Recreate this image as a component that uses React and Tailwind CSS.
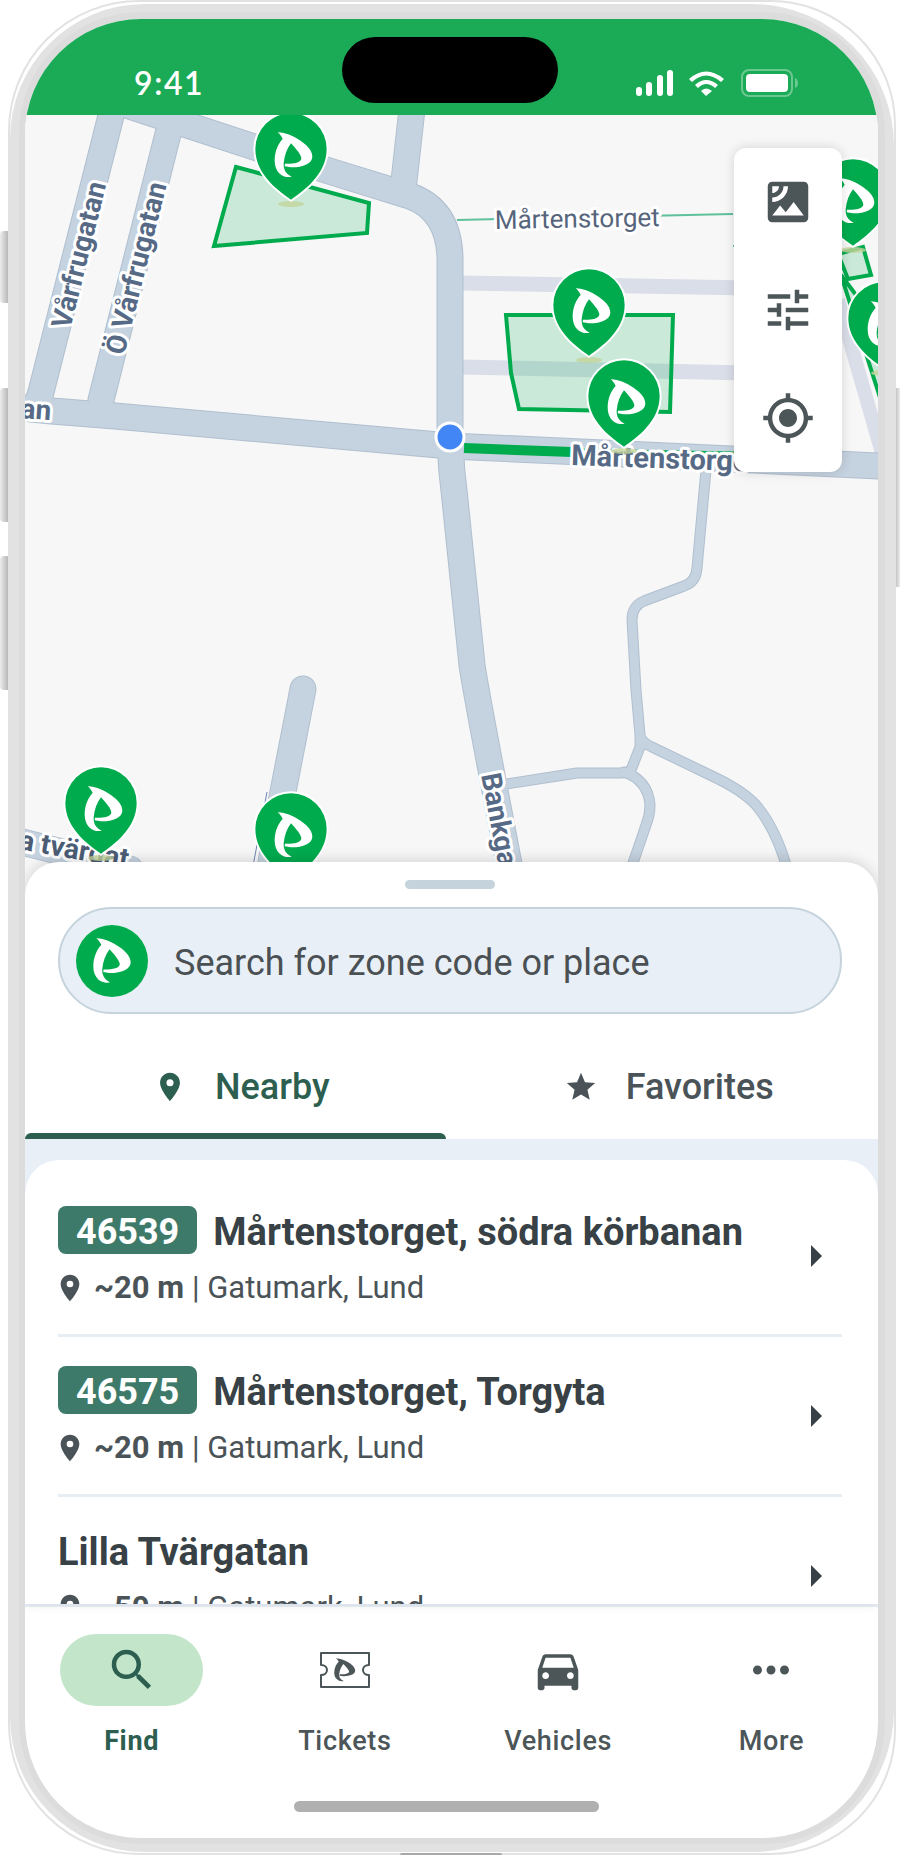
import React from "react";
import { MdDirectionsCar, MdLocationOn, MdMoreHoriz, MdMyLocation, MdSatellite, MdSearch, MdStar, MdTune } from "react-icons/md";

const LOGO_PATH =
  "M86 55C112 57 130 65 145 74C172 90 190 108 190 128C190 148 160 161 125 160L107 157L108 149C132 150 155 146 157 134C158 124 140 103 126 88C114 104 106 125 104 148C103 166 110 180 128 188C108 194 77 180 77 140C77 112 88 88 101 75C98 67 92 60 86 55Z";

const zones = [
  { code: "46539", name: "Mårtenstorget, södra körbanan", distance: "~20 m", area: "Gatumark, Lund" },
  { code: "46575", name: "Mårtenstorget, Torgyta", distance: "~20 m", area: "Gatumark, Lund" },
  { name: "Lilla Tvärgatan", distance: "~50 m", area: "Gatumark, Lund" },
];

const pins = [
  [853, 195],
  [884, 318],
  [291, 149],
  [589, 305],
  [624, 396],
  [101, 803],
  [291, 829],
];

// [path, width] in map coordinates
const roads = [
  ["M10 407L52 411L115 416L450 446L560 451L900 467", 25],
  ["M115 100L41 392L37 404", 25],
  ["M172 118L101 400", 25],
  ["M105 98L190 126L300 162L410 196Q449 210 450 258L450 440Q451 470 455 500L472 665Q474 680 491 770L512 880", 25],
  ["M413 100L403 190", 25],
  ["M303 689L282 797L268 880", 25],
  ["M10 839L130 869", 25],
  ["M706 470L697 568Q696 582 684 586L644 601Q632 606 632 620L636 690L640 735Q641 742 652 747L712 776Q742 790 756 805Q777 830 788 872", 9],
  ["M640 738L640 747L631 770Q627 773 620 773L577 773L500 785", 9],
  ["M624 772Q648 780 650 805Q650 815 646 825L632 866", 9],
];

const Logo = ({ className }) => (
  <svg viewBox="70 48 127 148" className={className} fill="currentColor" aria-hidden="true">
    <path d={LOGO_PATH} />
  </svg>
);

const Pin = ({ x, y }) => (
  <g transform={`translate(${x} ${y})`}>
    <ellipse cx="0" cy="55" rx="13" ry="3" fill="#c3d39b" opacity="0.8" />
    <g transform="scale(0.3333)">
      <path
        d="M0 152C-34 128 -107 78 -107 0A107 107 0 0 1 107 0C107 78 34 128 0 152Z"
        fill="#00ab4e"
        stroke="#fff"
        strokeWidth="12"
        paintOrder="stroke"
      />
      <path d={LOGO_PATH} fill="#fff" transform="translate(-126 -105)" />
    </g>
  </g>
);

const StreetLabel = ({ x, y, angle, size = 28, weight = 700, color = "#566a86", children }) => (
  <text
    transform={`translate(${x} ${y}) rotate(${angle})`}
    fontFamily="Roboto"
    fontSize={size}
    fontWeight={weight}
    fill={color}
    stroke="#fff"
    strokeWidth="6"
    strokeLinejoin="round"
    paintOrder="stroke"
  >
    {children}
  </text>
);

const MapView = () => (
  <svg viewBox="25 115 853 780" preserveAspectRatio="xMidYMin slice" className="absolute inset-0 h-full w-full" role="img" aria-label="Map">
    <rect x="0" y="100" width="900" height="850" fill="#f7f7f7" />

    <g stroke="#dadee8" fill="none">
      <path d="M460 283L750 288" strokeWidth="15" />
      <path d="M460 367L750 373" strokeWidth="15" />
      <path d="M838 300L884 460" strokeWidth="14" />
    </g>
    <path d="M457 220L733 214M733 246L745 245" stroke="#5fc09c" strokeWidth="2" fill="none" />

    {/* road casing first, then the fill on top */}
    <g fill="none" stroke="#b0bfcf" strokeLinecap="round" strokeLinejoin="round">
      {roads.map(([d, w]) => (
        <path key={d} d={d} strokeWidth={w + 2} />
      ))}
    </g>
    <g fill="none" stroke="#c5d2df" strokeLinecap="round" strokeLinejoin="round">
      {roads.map(([d, w]) => (
        <path key={d} d={d} strokeWidth={w} />
      ))}
    </g>
    <path d="M267 792L253 866" stroke="#6c82b4" strokeWidth="1" fill="none" />

    <g fill="#00ab4e" fillOpacity="0.18" stroke="#00ab4e" strokeWidth="4">
      <path d="M236 167L369 203L367 233L214 246Z" />
      <path d="M506 315L673 315L670 412L519 409L511 373Z" />
      <path d="M838 254L863 247L871 275L848 279Z" />
      <path d="M841 275L868 360L884 410L905 400L890 340Z" />
    </g>
    <path d="M464 448L572 452" stroke="#00ab4e" strokeWidth="10" fill="none" />
    <path d="M572 450L734 453" stroke="#00ab4e" strokeWidth="3" fill="none" />

    <StreetLabel x={70} y={330} angle={-76}>Vårfrugatan</StreetLabel>
    <StreetLabel x={124} y={356} angle={-76}>Ö Vårfrugatan</StreetLabel>
    <StreetLabel x={20} y={418} angle={4}>an</StreetLabel>
    <StreetLabel x={495} y={229} angle={-1} size={26} weight={400} color="#56657c">Mårtenstorget</StreetLabel>
    <StreetLabel x={571} y={465} angle={2} size={29}>Mårtenstorge</StreetLabel>
    <StreetLabel x={481} y={775} angle={79}>Bankga</StreetLabel>
    <StreetLabel x={18} y={849} angle={10} color="#4b5c75">a tvärgat</StreetLabel>

    {pins.map(([x, y]) => (
      <Pin key={`${x}-${y}`} x={x} y={y} />
    ))}
    <circle cx="450" cy="437" r="14" fill="#4285f4" stroke="#fff" strokeWidth="3" />
  </svg>
);

const StatusBar = () => (
  <header className="relative flex h-24 items-end justify-between bg-[#1bab57] pr-20 pb-4 pl-[109px] text-white">
    <span className="font-[Lato] text-[32px] leading-8 font-semibold tracking-wider">9:41</span>
    <div className="absolute inset-x-0 top-[18px] flex justify-center pr-[3px]">
      <div className="h-[66px] w-[216px] rounded-full bg-black" />
    </div>
    <svg viewBox="0 0 162 30" className="h-[30px] w-[162px]" fill="#fff" aria-hidden="true">
      <rect x="0" y="18" width="6" height="9" rx="3" />
      <rect x="10" y="13" width="6" height="14" rx="3" />
      <rect x="21" y="6" width="6" height="21" rx="3" />
      <rect x="31" y="1" width="6" height="26" rx="3" />
      <path d="M53 10Q70 -5 88 10L85 13Q70 0 56 13Z" />
      <path d="M59 16Q70 6 82 16L79 19Q70 11 62 19Z" />
      <path d="M65 22Q70 17 76 22L70 27Z" />
      <rect x="106" y="1" width="50" height="26" rx="7" fill="none" stroke="#fff" strokeOpacity="0.35" strokeWidth="2" />
      <rect x="110" y="5" width="42" height="18" rx="4" />
      <path d="M159 9Q162 10 162 14Q162 18 159 19Z" fillOpacity="0.35" />
    </svg>
  </header>
);

const ZoneRow = ({ zone, last }) => (
  <li>
    <a href="#zone" className={last ? "flex items-center pt-[29px] pr-5 pb-7" : "flex items-center border-b-[3px] border-[#e6edf3] pt-[29px] pr-5 pb-7"}>
      <div className="min-w-0 flex-1">
        <div className="flex h-12 items-center gap-4">
          {zone.code && (
            <span className="flex h-12 items-center rounded-lg bg-[#3e7a69] px-[18px] pt-1 text-4xl font-bold text-white">{zone.code}</span>
          )}
          <h2 className="truncate pt-1 text-[38px] leading-[48px] font-bold text-[#384145]">{zone.name}</h2>
        </div>
        <div className="mt-4 flex h-9 items-center gap-2 text-[31px] text-[#4a5357]">
          <MdLocationOn className="-ml-1 size-8" />
          <span>
            <b>{zone.distance}</b> | {zone.area}
          </span>
        </div>
      </div>
      <svg viewBox="0 0 11 22" className="h-[22px] w-[11px]" fill="#384145" aria-hidden="true">
        <path d="M0 0L11 11L0 22Z" />
      </svg>
    </a>
  </li>
);

const NavItem = ({ icon, label, active }) => (
  <a href="#nav" className="flex flex-col items-center gap-[19px]">
    <span
      className={
        active
          ? "flex h-[72px] w-[143px] items-center justify-center rounded-full bg-[#c3e6cb] text-[#2d5f50]"
          : "flex h-[72px] w-[143px] items-center justify-center text-[#4c5558]"
      }
    >
      {icon}
    </span>
    <span className={active ? "text-[27px] leading-8 font-bold tracking-wide text-[#2d5f50]" : "text-[27px] leading-8 font-medium tracking-wide text-[#4c5558]"}>
      {label}
    </span>
  </a>
);

const TicketIcon = () => (
  <svg viewBox="0 0 52 38" className="h-[38px] w-[52px]" aria-hidden="true">
    <path
      d="M2 2H50V14C42 14 42 24 50 24V36H2V24C10 24 10 14 2 14Z"
      fill="none"
      stroke="currentColor"
      strokeWidth="2"
      strokeLinejoin="round"
    />
    <path d={LOGO_PATH} fill="currentColor" transform="translate(1 -2) scale(0.185 0.17)" />
  </svg>
);

const App = () => {
  return (
    <div className="relative flex min-h-screen overflow-hidden bg-white pr-1 pl-2 font-[Roboto,sans-serif]">
      {/* side buttons */}
      <div className="absolute top-[231px] left-0 h-[72px] w-2 rounded-l-sm bg-linear-to-r from-[#ededed] to-[#b8b8b8]" />
      <div className="absolute top-[388px] left-0 h-[134px] w-2 rounded-l-sm bg-linear-to-r from-[#ededed] to-[#b8b8b8]" />
      <div className="absolute top-[556px] left-0 h-[134px] w-2 rounded-l-sm bg-linear-to-r from-[#ededed] to-[#b8b8b8]" />
      <div className="absolute top-[388px] right-0 h-[199px] w-1 bg-linear-to-r from-[#c4c4c4] to-[#ededed]" />

      {/* phone frame */}
      <div className="flex flex-1 rounded-l-[131px] rounded-r-[125px] border-2 border-[#e2e2e2] pt-0.5 pb-px">
        <div className="flex flex-1 rounded-l-[135px] rounded-r-[142px] bg-[#e2e2e2] px-[9px] py-2">
          <div className="flex flex-1 rounded-[122px] bg-[#dcdcdc] pt-[7px] pr-[7px] pb-1.5 pl-1.5">
            <div className="flex min-w-0 flex-1 flex-col overflow-hidden rounded-[116px] bg-white">
              <StatusBar />

              <main className="flex flex-1 flex-col">
                <div className="relative min-h-96 flex-1">
                  <MapView />
                  <div className="absolute top-[33px] right-9 flex w-[108px] flex-col overflow-hidden rounded-xl bg-white text-[#4c5558] shadow-[0_0_12px_rgba(0,0,0,0.15)]">
                    <button type="button" aria-label="Satellite view" className="flex h-[108px] items-center justify-center">
                      <MdSatellite className="size-[54px]" />
                    </button>
                    <button type="button" aria-label="Filters" className="flex h-[108px] items-center justify-center">
                      <MdTune className="size-[54px]" />
                    </button>
                    <button type="button" aria-label="My location" className="flex h-[108px] items-center justify-center">
                      <MdMyLocation className="size-[54px]" />
                    </button>
                  </div>
                </div>

                {/* bottom sheet */}
                <section className="relative -mt-8 rounded-t-[34px] bg-white pt-[18px] shadow-[0_-2px_14px_rgba(0,0,0,0.14)]">
                  <div className="flex justify-center pr-[3px]">
                    <div className="h-[9px] w-[90px] rounded-full bg-[#c5d3dd]" />
                  </div>
                  <form className="mt-[18px] pr-9 pl-[33px]">
                    <label className="flex h-[107px] items-center gap-[26px] rounded-full border-2 border-[#c5d3dd] bg-[#e8eff6] px-4">
                      <span className="flex size-[72px] shrink-0 items-center justify-center rounded-full bg-[#00ab4e] text-white">
                        <Logo className="h-[49px] w-[42px]" />
                      </span>
                      <input
                        type="text"
                        aria-label="Search for zone code or place"
                        placeholder="Search for zone code or place"
                        className="min-w-0 flex-1 bg-transparent pt-1 text-4xl text-[#4a5053] outline-none placeholder:text-[#4a5053]"
                      />
                    </label>
                  </form>

                  <div role="tablist" className="mt-[26px] grid grid-cols-2 text-4xl font-medium">
                    <button type="button" role="tab" aria-selected="true" className="flex flex-col text-[#2d5f50]">
                      <span className="flex h-[93px] w-full items-center justify-center gap-7 pl-1.5">
                        <MdLocationOn className="size-[34px]" />
                        Nearby
                      </span>
                      <span className="w-full pr-1.5">
                        <span className="block h-1.5 rounded-t-md bg-[#2d5f50]" />
                      </span>
                    </button>
                    <button type="button" role="tab" aria-selected="false" className="flex h-[99px] items-center justify-center gap-7 pb-1.5 pl-2 text-[#4a5357]">
                      <MdStar className="size-[34px]" />
                      Favorites
                    </button>
                  </div>

                  <div className="bg-[#e8eff6] pt-[21px]">
                    <ul className="h-[444px] overflow-hidden rounded-t-[34px] bg-white pt-[17px] pr-9 pl-[33px]">
                      {zones.map((zone, i) => (
                        <ZoneRow key={zone.name} zone={zone} last={i === zones.length - 1} />
                      ))}
                    </ul>
                  </div>
                </section>
              </main>

              <nav className="grid grid-cols-4 border-t-[3px] border-[#e8eff6] pt-[27px]">
                <NavItem active label="Find" icon={<MdSearch className="size-[54px]" />} />
                <NavItem label="Tickets" icon={<TicketIcon />} />
                <NavItem label="Vehicles" icon={<MdDirectionsCar className="size-[54px]" />} />
                <NavItem label="More" icon={<MdMoreHoriz className="size-[54px]" />} />
              </nav>
              <div className="mt-11 mb-[26px] flex justify-center pr-2.5">
                <div className="h-[11px] w-[305px] rounded-full bg-[#b0b0b0]" />
              </div>
            </div>
          </div>
        </div>
      </div>
      <div className="absolute bottom-0 left-[400px] h-0.5 w-[102px] rounded-t-sm bg-[#a8a8a8]" />
    </div>
  );
};

export default App;
